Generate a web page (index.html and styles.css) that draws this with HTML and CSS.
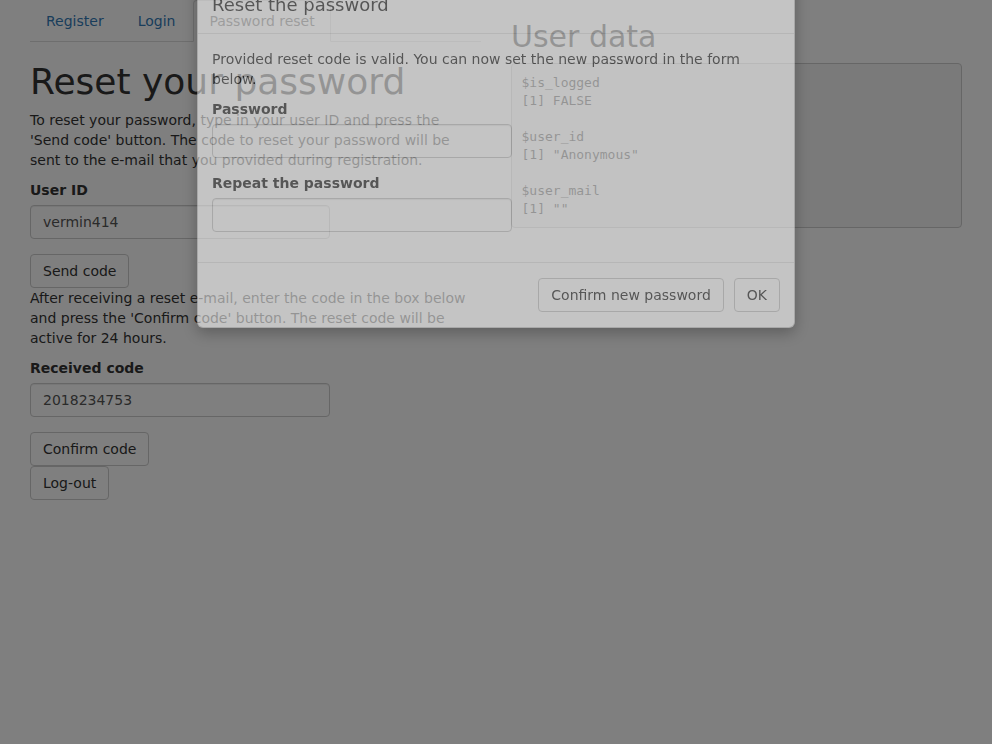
FILE: index.html
```html
<!DOCTYPE html>
<html lang="en">
<head>
<meta charset="utf-8">
<title>Reset your password</title>
<link rel="stylesheet" href="styles.css">
</head>
<body>
<div class="page">
  <div class="col">
    <ul class="nav-tabs">
      <li><a href="#">Register</a></li>
      <li><a href="#">Login</a></li>
      <li class="active"><a href="#">Password reset</a></li>
    </ul>
    <div class="tab-content">
      <h1>Reset your password</h1>
      <p>To reset your password, type in your user ID and press the 'Send code' button. The code to reset your password will be sent to the e-mail that you provided during registration.</p>
      <div class="form-group">
        <label class="control-label">User ID</label>
        <input class="form-control" type="text" value="vermin414">
      </div>
      <div class="stack"><button class="btn">Send code</button></div>
      <p>After receiving a reset e-mail, enter the code in the box below and press the 'Confirm code' button. The reset code will be active for 24 hours.</p>
      <div class="form-group">
        <label class="control-label">Received code</label>
        <input class="form-control" type="text" value="2018234753">
      </div>
      <div class="stack">
        <button class="btn">Confirm code</button>
        <button class="btn">Log-out</button>
      </div>
    </div>
  </div>
  <div class="col">
    <h2>User data</h2>
    <pre class="output">$is_logged
[1] FALSE

$user_id
[1] "Anonymous"

$user_mail
[1] ""</pre>
  </div>
</div>

<div class="backdrop"></div>

<div class="modal">
  <div class="modal-content">
    <div class="modal-header">
      <h4 class="modal-title">Reset the password</h4>
    </div>
    <div class="modal-body">
      <p>Provided reset code is valid. You can now set the new password in the form below.</p>
      <div class="form-group">
        <label class="control-label">Password</label>
        <input class="form-control" type="password">
      </div>
      <div class="form-group">
        <label class="control-label">Repeat the password</label>
        <input class="form-control" type="password">
      </div>
    </div>
    <div class="modal-footer">
      <button class="btn">Confirm new password</button>
      <button class="btn">OK</button>
    </div>
  </div>
</div>
</body>
</html>
```

FILE: styles.css
```css
* { box-sizing: border-box; }

html, body {
  margin: 0;
  background: #fff;
}

body {
  font-family: "DejaVu Sans", sans-serif;
  font-size: 14px;
  line-height: 20px;
  color: #333;
}

.page {
  display: grid;
  grid-template-columns: 451px 451px;
  column-gap: 30px;
  padding: 0 30px;
}

.nav-tabs {
  display: flex;
  list-style: none;
  margin: 0;
  padding: 0;
  border-bottom: 1px solid #ddd;
}

.nav-tabs li {
  margin-bottom: -1px;
}

.nav-tabs a {
  display: block;
  padding: 10px 15px;
  margin-right: 2px;
  line-height: 20px;
  border: 1px solid transparent;
  border-radius: 4px 4px 0 0;
  color: #337ab7;
  text-decoration: none;
}

.nav-tabs .active a {
  color: #555;
  background: #fff;
  border-color: #ddd;
  border-bottom-color: transparent;
}

h1 {
  font-size: 36px;
  font-weight: 500;
  line-height: 1.1;
  margin: 20px 0 8px;
}

h2 {
  font-size: 30px;
  font-weight: 500;
  line-height: 1.1;
  margin: 20px 0 10px;
}

p {
  margin: 0 0 10px;
}

.form-group {
  margin-bottom: 15px;
}

.control-label {
  display: inline-block;
  margin-bottom: 5px;
  font-weight: bold;
}

.form-control {
  display: block;
  width: 300px;
  height: 34px;
  padding: 6px 12px;
  font-family: inherit;
  font-size: 14px;
  line-height: 20px;
  color: #555;
  background: #fff;
  border: 1px solid #ccc;
  border-radius: 4px;
  box-shadow: inset 0 1px 1px rgba(0, 0, 0, 0.075);
}

.stack {
  display: flex;
  flex-direction: column;
  align-items: flex-start;
}

.btn {
  display: inline-block;
  padding: 6px 12px;
  font-family: inherit;
  font-size: 14px;
  line-height: 20px;
  color: #333;
  background: #fff;
  border: 1px solid #ccc;
  border-radius: 4px;
  cursor: pointer;
}

.output {
  margin: 0 0 10px;
  padding: 9.5px;
  font-family: "DejaVu Sans Mono", monospace;
  font-size: 13px;
  line-height: 18px;
  color: #333;
  background: #f5f5f5;
  border: 1px solid #ccc;
  border-radius: 4px;
  white-space: pre;
}

.backdrop {
  position: fixed;
  inset: 0;
  background: rgba(0, 0, 0, 0.5);
}

.modal {
  position: fixed;
  top: -24px;
  left: 197px;
  width: 598px;
  opacity: 0.537;
}

.modal-content {
  background: #fff;
  border: 1px solid rgba(0, 0, 0, 0.2);
  border-radius: 6px;
  box-shadow: 0 5px 15px rgba(0, 0, 0, 0.5);
}

.modal-header {
  padding: 15px 15px 15px 14px;
  border-bottom: 1px solid #e5e5e5;
}

.modal-title {
  margin: 0;
  font-size: 18px;
  font-weight: 500;
  line-height: 1.42857;
}

.modal-body {
  padding: 15px 15px 15px 14px;
}

.modal-footer {
  display: flex;
  justify-content: flex-end;
  gap: 10px;
  padding: 15px 14px 15px 15px;
  border-top: 1px solid #e5e5e5;
}
```
